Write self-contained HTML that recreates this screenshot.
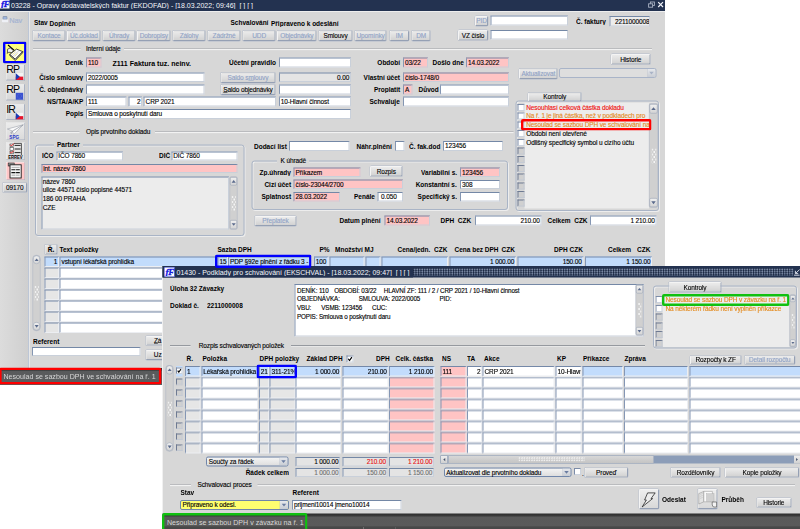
<!DOCTYPE html>
<html><head><meta charset="utf-8"><title>EKDOFAD</title>
<style>
html,body{margin:0;padding:0;background:#fff;}
body{width:800px;height:529px;position:relative;overflow:hidden;font-family:"Liberation Sans",sans-serif;}
#s{position:absolute;left:0;top:0;width:1600px;height:1058px;transform:scale(0.5);transform-origin:0 0;overflow:hidden;}

.a{position:absolute;box-sizing:content-box;white-space:nowrap;}
.t{font:13px/20px "Liberation Sans",sans-serif;color:#000;letter-spacing:-0.24px;-webkit-text-stroke:0.24px currentColor;}
.b{font:bold 13.2px/20px "Liberation Sans",sans-serif;color:#000;transform:scaleX(0.985);transform-origin:0 50%;}
.b.r{transform-origin:100% 50%;}
.tt{font:16px/20px "Liberation Sans",sans-serif;color:#f4f6fa;transform:scaleX(0.875);transform-origin:0 50%;}
.st{font:14.8px/20px "Liberation Sans",sans-serif;color:#d8d8d8;transform:scaleX(0.958);transform-origin:0 50%;}
.tb{background:#233250;}
.tex{background-color:#3b4a67;background-image:radial-gradient(circle at 2px 2px,#8391ac 1px,transparent 2px),radial-gradient(circle at 2px 2px,#17243d 1.3px,transparent 2.2px);background-size:5px 4.2px;background-position:2.5px 0.2px,0 2.1px;}
.f{box-sizing:border-box;border:2px solid;border-color:#7488a6 #c9d0da #c9d0da #8496b2;font:13px/16px "Liberation Sans",sans-serif;color:#000;overflow-x:clip;overflow-y:visible;letter-spacing:-0.24px;-webkit-text-stroke:0.24px currentColor;}
.ft{position:absolute;white-space:nowrap;font:13px/20px "Liberation Sans",sans-serif;letter-spacing:-0.24px;-webkit-text-stroke:0.24px currentColor;}
.bt{position:absolute;left:0;right:0;text-align:center;white-space:nowrap;font:13px/20px "Liberation Sans",sans-serif;letter-spacing:-0.24px;-webkit-text-stroke:0.2px currentColor;}
.g{border-color:#7488a8 #eceef2 #eceef2 #8496b4;}
.btn{box-sizing:border-box;border:2px solid;border-color:#f4f4f4 #95a0b4 #95a0b4 #f4f4f4;box-shadow:0 0 0 0.8px #b4bccb;background:linear-gradient(#ebebeb,#d2d2d2);border-radius:3px;text-align:center;font:13px/16px "Liberation Sans",sans-serif;color:#000;overflow:hidden;letter-spacing:-0.24px;}
.btn.dis{color:#8fa2c6;}
.btn u{text-decoration:underline;}
.hl{height:3.2px;background:linear-gradient(#8e9299 0,#8e9299 45%,#f2f2f2 55%,#f2f2f2 100%);transform:translateY(-0.8px);}
.grp{box-sizing:border-box;border:2px solid #a9b4c6;border-radius:6px;box-shadow:inset 2px 2px 0 #ededed,2px 2px 0 #ededed;}
.chk{box-sizing:border-box;border:2px solid;border-color:#7c8ca8 #ccd3de #ccd3de #7c8ca8;}
.vs{box-sizing:border-box;background:#d0d0d0;border:1px solid #a8b0c0;}
.vs .sa{position:absolute;left:0;right:0;background:linear-gradient(#f0f0f0,#d4d4d4);border:1px solid #98a4b8;box-sizing:border-box;}
.vs .sa svg{position:absolute;left:0;top:0;width:100%;height:100%;}
.vs .grip{position:absolute;left:3.6px;right:2.4px;height:30px;background-image:radial-gradient(circle at 2px 2px,#f6f6f6 1.2px,transparent 2px),radial-gradient(circle at 2px 2px,#f6f6f6 1.2px,transparent 2px);background-size:6.8px 10px;background-position:0 0,3.4px 5px;}
.hgrip{position:absolute;left:140px;width:132px;top:2px;height:10px;background-image:radial-gradient(circle at 2px 2px,#f4f4f4 1.2px,transparent 1.8px);background-size:5px 5px;}
.cb{position:absolute;right:0;top:0;width:16px;background:linear-gradient(#e6e8ec,#c9cdd4);border-left:1px solid #aab2c2;border-radius:0 3px 3px 0;}
.cb svg{position:absolute;left:0;top:0;width:100%;height:100%;}
.ib{background:linear-gradient(#eeeeee,#d8d8d8);}
</style></head>
<body>
<div id="s">
<div class="a" style="left:0;top:0;width:1330px;height:736px;background:#d7d7d7;"></div>
<div class="a" style="left:0;top:21px;width:56px;height:715px;background:linear-gradient(90deg,#dcdcdc,#cfcfcf);border-right:2px solid #bcc6d6;box-shadow:2px 0 0 #e8e8e8;"></div>
<div class="a tb" style="left:0;top:0;width:1330px;height:21.8px;"></div>
<div class="a" style="left:0;top:0;width:19px;height:17px;background:#fff;"></div>
<div class="a" style="left:1px;top:-2px;font:italic bold 18px/20px 'Liberation Serif',serif;color:#1414e0;letter-spacing:-2.4px;-webkit-text-stroke:0.6px #1414e0;">&#402;F</div>
<div class="a tt" style="left:22px;top:0.4px;">03228 - Opravy dodavatelských faktur (EKDOFAD) - [18.03.2022; 09:46]&nbsp; [ ] [ ]</div>
<svg class="a" style="left:1280px;top:0px;width:50px;height:20px" viewBox="640 0 25 10"><rect x="650.4" y="2" width="4" height="3.4" fill="#233250" stroke="#a9b2c4" stroke-width="0.9"/><rect x="648.6" y="3.8" width="4" height="3.4" fill="#233250" stroke="#a9b2c4" stroke-width="0.9"/><path d="M658.2 2.2 L663 7 M663 2.2 L658.2 7" stroke="#f0f2f8" stroke-width="1.2"/></svg>
<div class="a" style="left:0;top:21.8px;width:1330px;height:2.4px;background:#eeeeee;"></div>
<svg class="a" style="left:3px;top:32px;width:14px;height:14px" viewBox="0 0 7 7"><rect x="1.2" y="0.3" width="4.6" height="3.4" rx="0.6" fill="#7d8ca6"/><rect x="1.8" y="1" width="3.4" height="2" fill="#9db4dc"/><rect x="0.4" y="3.6" width="6.2" height="2.6" rx="0.6" fill="#eef0f6"/></svg>
<div class="a t" style="left:18.6px;top:30px;color:#a6b4d2;font-size:14.8px;-webkit-text-stroke:0.4px #a6b4d2;">Nav</div>
<div class="a" style="left:5.6px;top:83.4px;width:47.8px;height:43.8px;box-shadow:inset 0 0 0 4.8px #0000ff;background:#ffff80;border-radius:3.6px;"></div>
<svg class="a" style="left:0px;top:76px;width:64px;height:60px" viewBox="0 38 32 30"><path d="M9.7 54.5 L16.5 49.1 L22.7 51.6 L15.3 59.3 Z" fill="#fafafa" stroke="#000" stroke-width="0.7" stroke-linejoin="round"/><path d="M9.7 54.5 L9.9 55.8 L15.3 60.6 L22.7 52.8 L22.7 51.6 L15.3 59.3 Z" fill="#d8d8d8" stroke="#000" stroke-width="0.6" stroke-linejoin="round"/><path d="M13 56.2 L19.3 50.3" stroke="#b0b0b0" stroke-width="0.5"/><path d="M12.2 54.6 L15.6 51.8 M14.6 56.4 L17.6 53.4" stroke="#e8e070" stroke-width="0.7"/><path d="M7.6 49.2 L10.4 47.8 L13.2 50.6 L12 52.6 L8.6 52.2 L7.4 53.4 Z" fill="#f4f4f4" stroke="#222" stroke-width="0.7" stroke-linejoin="round"/><path d="M8 45 L14.3 50.3" stroke="#000" stroke-width="1.1"/></svg>
<div class="a" style="left:12px;top:128.6px;width:38px;height:32.6px;background:linear-gradient(#ebebeb,#d8d8d8);border-right:2px solid #aab2c2;border-bottom:2px solid #aab2c2;border-top:1px solid #f4f4f4;border-left:1px solid #f4f4f4;box-sizing:border-box;"></div>
<div class="a" style="left:12.6px;top:125.8px;font:21px/26px 'Liberation Sans',sans-serif;color:#000;letter-spacing:-1.8px;">RP</div>
<svg class="a" style="left:31.4px;top:145.8px;width:15.6px;height:14.6px" viewBox="0 0 8 7.3"><rect width="8" height="3.65" fill="#f4f4f4"/><rect y="3.65" width="8" height="3.65" fill="#e8142c"/><path d="M0 0 L4.4 3.65 L0 7.3 Z" fill="#1c3cb4"/></svg>
<div class="a" style="left:12px;top:168px;width:38px;height:32.6px;background:linear-gradient(#ebebeb,#d8d8d8);border-right:2px solid #aab2c2;border-bottom:2px solid #aab2c2;border-top:1px solid #f4f4f4;border-left:1px solid #f4f4f4;box-sizing:border-box;"></div>
<div class="a" style="left:12.6px;top:165.2px;font:21px/26px 'Liberation Sans',sans-serif;color:#000;letter-spacing:-1.8px;">RP</div>
<svg class="a" style="left:31.4px;top:185.2px;width:15.6px;height:14.6px" viewBox="0 0 8 7.3"><rect width="8" height="7.3" fill="#3a52d0"/><circle cx="4" cy="3.65" r="2.2" fill="none" stroke="#6478e0" stroke-width="0.8" stroke-dasharray="0.7 0.7"/></svg>
<div class="a" style="left:12px;top:207.6px;width:38px;height:32.6px;background:linear-gradient(#ebebeb,#d8d8d8);border-right:2px solid #aab2c2;border-bottom:2px solid #aab2c2;border-top:1px solid #f4f4f4;border-left:1px solid #f4f4f4;box-sizing:border-box;"></div>
<div class="a" style="left:12.6px;top:204.8px;font:21px/26px 'Liberation Sans',sans-serif;color:#000;letter-spacing:-1.8px;">IR</div>
<svg class="a" style="left:31.4px;top:224.8px;width:15.6px;height:14.6px" viewBox="0 0 8 7.3"><rect width="8" height="3.65" fill="#f4f4f4"/><rect y="3.65" width="8" height="3.65" fill="#e8142c"/><path d="M0 0 L4.4 3.65 L0 7.3 Z" fill="#1c3cb4"/></svg>
<div class="a" style="left:12.4px;top:245.4px;width:37.6px;height:35px;background:linear-gradient(#ececec,#dadada);border:1px solid;border-color:#f4f4f4 #a8b0c2 #a8b0c2 #f4f4f4;box-sizing:border-box;"></div>
<svg class="a" style="left:4px;top:240px;width:56px;height:128px" viewBox="2 120 28 64"><path d="M7.4 129 L23.2 124.8 L13.6 134.6 L12.4 131 Z" fill="#fbfbfb" stroke="#8a909c" stroke-width="0.5" stroke-linejoin="round"/><path d="M12.4 131 L23.2 124.8 L10.6 132.4 L11.4 134 Z" fill="#b8bcc6" stroke="#8a909c" stroke-width="0.35"/><text x="14.2" y="139.3" font-family="Liberation Sans" font-weight="bold" font-size="4.6" fill="#2a36c8" text-anchor="middle">SPG</text></svg>
<div class="a" style="left:12.4px;top:284.8px;width:37.6px;height:34.4px;background:linear-gradient(#ececec,#dedede);border:1px solid;border-color:#f4f4f4 #a8b0c2 #a8b0c2 #f4f4f4;box-sizing:border-box;"></div>
<svg class="a" style="left:4px;top:240px;width:56px;height:128px" viewBox="2 120 28 64"><rect x="10" y="144" width="3.4" height="2.6" fill="#fff" stroke="#222" stroke-width="0.5"/><rect x="10" y="147.6" width="3.4" height="2.6" fill="#fff" stroke="#222" stroke-width="0.5"/><rect x="10" y="151.2" width="3.4" height="2.6" fill="#fff" stroke="#222" stroke-width="0.5"/><path d="M10.2 144.6 L11.4 146 L13.8 143.4 M10.2 151.8 L11.4 153.2 L13.8 150.6" stroke="#e01818" stroke-width="0.9" fill="none"/><path d="M14.6 145.4 H20.6 M14.6 149 H20.6 M14.6 152.6 H20.6" stroke="#111" stroke-width="0.9"/><path d="M14 143.4 H21.4 V155" stroke="#111" stroke-width="0.7" fill="none"/><text x="15.4" y="158.6" font-family="Liberation Sans" font-weight="bold" font-size="4.8" fill="#000" text-anchor="middle" textLength="14.4" lengthAdjust="spacingAndGlyphs">ERREV</text></svg>
<div class="a" style="left:12.4px;top:323.6px;width:37.6px;height:36.4px;background:#ffc6c6;border:1px solid;border-color:#f4f4f4 #a8b0c2 #a8b0c2 #f4f4f4;box-sizing:border-box;"></div>
<svg class="a" style="left:4px;top:240px;width:56px;height:128px" viewBox="2 120 28 64"><rect x="8.2" y="163" width="6" height="3" fill="#9a9a9a" stroke="#222" stroke-width="0.6"/><rect x="10" y="164.8" width="11.2" height="13.2" fill="#f6f6f6" stroke="#1a1a1a" stroke-width="0.9"/><path d="M11.6 167.4 H19.6" stroke="#888" stroke-width="0.6"/><path d="M11.4 169.8 H19.8 M11.4 172.6 H19.8" stroke="#111" stroke-width="1.1"/><path d="M11.6 175.2 H19.6" stroke="#777" stroke-width="0.6"/><path d="M15.6 168.6 V176.4" stroke="#f6f6f6" stroke-width="0.6"/></svg>
<div class="a btn " style="left:5.2px;top:364.6px;width:48.8px;height:20px;"><div class="bt" style="top:-1.7px;">09170</div></div>
<div class="a b" style="left:68px;top:35.2px;">Stav</div>
<div class="a b" style="left:99.2px;top:36.8px;">Doplněn</div>
<div class="a b" style="left:461px;top:35.2px;">Schvalování</div>
<div class="a b" style="left:541.6px;top:36.8px;">Připraveno k odeslání</div>
<div class="a btn dis " style="left:65px;top:60.6px;width:66.4px;height:21.2px;"><div class="bt" style="top:-1.1px;">Kontace</div></div>
<div class="a btn dis " style="left:134px;top:60.6px;width:67.4px;height:21.2px;"><div class="bt" style="top:-1.1px;">Úč.doklad</div></div>
<div class="a btn dis " style="left:205px;top:60.6px;width:66.4px;height:21.2px;"><div class="bt" style="top:-1.1px;">Úhrady</div></div>
<div class="a btn dis " style="left:274px;top:60.6px;width:67.4px;height:21.2px;"><div class="bt" style="top:-1.1px;">Dobropisy</div></div>
<div class="a btn dis " style="left:345px;top:60.6px;width:66.4px;height:21.2px;"><div class="bt" style="top:-1.1px;">Zálohy</div></div>
<div class="a btn dis " style="left:415px;top:60.6px;width:66.4px;height:21.2px;"><div class="bt" style="top:-1.1px;">Zádržné</div></div>
<div class="a btn dis " style="left:485px;top:60.6px;width:66.4px;height:21.2px;"><div class="bt" style="top:-1.1px;">UDD</div></div>
<div class="a btn dis " style="left:554px;top:60.6px;width:79.4px;height:21.2px;"><div class="bt" style="top:-1.1px;">Objednávky</div></div>
<div class="a btn " style="left:636.5px;top:60.6px;width:68.9px;height:21.2px;"><div class="bt" style="top:-1.1px;">Smlouvy</div></div>
<div class="a btn dis " style="left:709px;top:60.6px;width:64.4px;height:21.2px;"><div class="bt" style="top:-1.1px;">Upomínky</div></div>
<div class="a btn dis " style="left:779px;top:60.6px;width:39.4px;height:21.2px;"><div class="bt" style="top:-1.1px;">IM</div></div>
<div class="a btn dis " style="left:823px;top:60.6px;width:38.4px;height:21.2px;"><div class="bt" style="top:-1.1px;">DM</div></div>
<div class="a btn dis " style="left:950px;top:32.4px;width:26px;height:19.2px;"><div class="bt" style="top:-2.1px;">PID</div></div>
<div class="a f " style="left:981px;top:31.4px;width:155px;height:19.8px;background:#fff;"></div>
<div class="a b" style="left:1152px;top:33px;">Č. faktury</div>
<div class="a f " style="left:1219.2px;top:32px;width:80.8px;height:20.8px;background:#ececec;"><div class="ft" style="left:2px;top:-1.3px;">&nbsp;&nbsp;2211000008</div></div>
<div class="a btn " style="left:916px;top:60.4px;width:60px;height:20.6px;"><div class="bt" style="top:-1.4px;">VZ číslo</div></div>
<div class="a f " style="left:981px;top:60px;width:155px;height:19.4px;background:#fff;"></div>
<div class="a hl" style="left:66px;top:98px;width:95px;"></div>
<div class="a t" style="left:172px;top:88px;">Interní údaje</div>
<div class="a hl" style="left:248px;top:98px;width:1056px;"></div>
<div class="a b r" style="right:1433.6px;top:115.6px;">Deník</div>
<div class="a f " style="left:172px;top:115.4px;width:31.2px;height:19.6px;background:#ffc4c4;"><div class="ft" style="left:2px;top:-1.9px;">110</div></div>
<div class="a b" style="left:224.8px;top:115.6px;font-size:14.3px;">Z111 Faktura tuz. neinv.</div>
<div class="a b" style="left:457.5px;top:115.6px;">Účetní pravidlo</div>
<div class="a f " style="left:557.5px;top:115.4px;width:144px;height:19.6px;background:#fff;"></div>
<div class="a b r" style="right:800px;top:115.6px;">Období</div>
<div class="a f " style="left:806px;top:115.4px;width:50px;height:19.6px;background:#ffc4c4;"><div class="ft" style="left:2px;top:-1.9px;">03/22</div></div>
<div class="a b" style="left:864.8px;top:115.6px;">Došlo dne</div>
<div class="a f " style="left:932px;top:115.4px;width:85.5px;height:19.6px;background:#ffc4c4;"><div class="ft" style="left:2px;top:-1.9px;">14.03.2022</div></div>
<div class="a btn " style="left:1222px;top:108px;width:79px;height:21px;"><div class="bt" style="top:-1.2px;">Historie</div></div>
<div class="a b r" style="right:1433.6px;top:145.2px;">Číslo smlouvy</div>
<div class="a f " style="left:172px;top:145.4px;width:236.8px;height:19px;background:#fff;"><div class="ft" style="left:2px;top:-2.2px;">2022/0005</div></div>
<div class="a btn dis " style="left:441px;top:144.8px;width:109.8px;height:21.2px;"><div class="bt" style="top:-1.1px;">Saldo s<u>m</u>louvy</div></div>
<div class="a f " style="left:557.5px;top:145.4px;width:144px;height:19px;background:#e4e4e4;"><div class="ft" style="right:1px;top:-2.2px;">0.00</div></div>
<div class="a b r" style="right:800px;top:145.2px;">Vlastní účet</div>
<div class="a f " style="left:806px;top:145.4px;width:211.5px;height:19px;background:#ffc4c4;"><div class="ft" style="left:2px;top:-2.2px;">číslo-1748/0</div></div>
<div class="a btn dis " style="left:1038px;top:136.8px;width:77.2px;height:21.2px;"><div class="bt" style="top:-1.1px;">Aktualizovat</div></div>
<div class="a f" style="left:1118px;top:136px;width:194.8px;height:20px;background:#dedede;border-radius:4px;border-color:#a9b4c8;"><div class="cb" style="height:16px"><svg viewBox="0 0 10 10" preserveAspectRatio="none"><path d="M2.2 3.4 L5 7 L7.8 3.4 Z" fill="#a9b3c6"/></svg></div></div>
<div class="a b r" style="right:1433.6px;top:169.4px;">Č. objednávky</div>
<div class="a f " style="left:172px;top:169.2px;width:236.8px;height:19.6px;background:#fff;"></div>
<div class="a btn " style="left:441px;top:168.6px;width:109.8px;height:21.6px;"><div class="bt" style="top:-0.9px;"><u>S</u>aldo objednávky</div></div>
<div class="a f " style="left:557.5px;top:169.2px;width:144px;height:19.6px;background:#fff;"></div>
<div class="a b r" style="right:800px;top:169.4px;">Proplatit</div>
<div class="a f " style="left:806px;top:169.2px;width:18.8px;height:19.6px;background:#ffc4c4;"><div class="ft" style="left:2px;top:-1.9px;">A</div></div>
<div class="a b" style="left:836.8px;top:169.4px;">Důvod</div>
<div class="a f " style="left:880px;top:169.2px;width:137.5px;height:19.6px;background:#fff;"></div>
<div class="a b r" style="right:1433.6px;top:193.8px;">NS/TA/A/KP</div>
<div class="a f " style="left:172px;top:193.4px;width:81.2px;height:19.8px;background:#fff;"><div class="ft" style="left:2px;top:-1.8px;">111</div></div>
<div class="a f " style="left:257.2px;top:193.4px;width:26.8px;height:19.8px;background:#fff;"><div class="ft" style="right:1px;top:-1.8px;">2</div></div>
<div class="a f " style="left:287.2px;top:193.4px;width:265.3px;height:19.8px;background:#fff;"><div class="ft" style="left:2px;top:-1.8px;">CRP 2021</div></div>
<div class="a f " style="left:557.5px;top:193.4px;width:144px;height:19.8px;background:#fff;"><div class="ft" style="left:2px;top:-1.8px;">10-Hlavní činnost</div></div>
<div class="a b r" style="right:800px;top:193.8px;">Schvaluje</div>
<div class="a f " style="left:806px;top:193.4px;width:211.5px;height:19.8px;background:#fff;"></div>
<div class="a b r" style="right:1433.6px;top:218.4px;">Popis</div>
<div class="a f " style="left:172px;top:218px;width:529.5px;height:19.8px;background:#fff;"><div class="ft" style="left:2px;top:-1.8px;">Smlouva o poskytnutí daru</div></div>
<div class="a grp" style="left:1031px;top:201px;width:286.5px;height:221px;"></div>
<div class="a btn " style="left:1056px;top:184.8px;width:107.2px;height:18.6px;"><div class="bt" style="top:-2.4px;">Kontroly</div></div>
<div class="a " style="left:1049px;top:206px;width:248.5px;height:211px;background:#ececec;"></div>
<div class="a vs" style="left:1298px;top:207px;width:18px;height:208.4px;border-radius:3px;"><div class="sa" style="top:0;height:18.9px;border-radius:3px;"><svg viewBox="0 0 10 10"><path d="M1.8 7 L5 2.9 L8.2 7 Z" fill="#5a6a8c"/></svg></div><div class="sa" style="bottom:0;height:18.9px;border-radius:3px;"><svg viewBox="0 0 10 10"><path d="M1.8 3 L5 7.1 L8.2 3 Z" fill="#5a6a8c"/></svg></div><div class="grip" style="top:89.2px"></div></div>
<div class="a chk" style="left:1035px;top:208px;width:14px;height:14px;background:#fff;"></div>
<div class="a t" style="left:1052.5px;top:205px;color:#f01010;">Nesouhlasí celková částka dokladu</div>
<div class="a chk" style="left:1035px;top:225.4px;width:14px;height:14px;background:#fff;"></div>
<div class="a t" style="left:1052.5px;top:222.4px;color:#e48a1c;">Na ř. 1 je jiná částka, než v podkladech pro</div>
<div class="a chk" style="left:1035px;top:242.8px;width:14px;height:14px;background:#fff;"></div>
<div class="a t" style="left:1052.5px;top:239.8px;color:#e48a1c;">Nesoulad se sazbou DPH ve schvalování na</div>
<div class="a chk" style="left:1035px;top:260.2px;width:14px;height:14px;background:#fff;"></div>
<div class="a t" style="left:1052.5px;top:257.2px;color:#000;">Období není otevřené</div>
<div class="a chk" style="left:1035px;top:277.6px;width:14px;height:14px;background:#fff;"></div>
<div class="a t" style="left:1052.5px;top:274.6px;color:#000;">Odlišný specifický symbol u cizího účtu</div>
<div class="a chk" style="left:1035px;top:295px;width:14px;height:14px;background:#d0d0d0;border-color:#6e7a92 #c4cad4 #c4cad4 #6e7a92;"></div>
<div class="a chk" style="left:1035px;top:312.4px;width:14px;height:14px;background:#d0d0d0;border-color:#6e7a92 #c4cad4 #c4cad4 #6e7a92;"></div>
<div class="a chk" style="left:1035px;top:329.8px;width:14px;height:14px;background:#d0d0d0;border-color:#6e7a92 #c4cad4 #c4cad4 #6e7a92;"></div>
<div class="a chk" style="left:1035px;top:347.2px;width:14px;height:14px;background:#d0d0d0;border-color:#6e7a92 #c4cad4 #c4cad4 #6e7a92;"></div>
<div class="a chk" style="left:1035px;top:364.6px;width:14px;height:14px;background:#d0d0d0;border-color:#6e7a92 #c4cad4 #c4cad4 #6e7a92;"></div>
<div class="a chk" style="left:1035px;top:382px;width:14px;height:14px;background:#d0d0d0;border-color:#6e7a92 #c4cad4 #c4cad4 #6e7a92;"></div>
<div class="a chk" style="left:1035px;top:399.4px;width:14px;height:14px;background:#d0d0d0;border-color:#6e7a92 #c4cad4 #c4cad4 #6e7a92;"></div>
<div class="a hl" style="left:66px;top:264px;width:93px;"></div>
<div class="a t" style="left:172px;top:254px;">Opis prvotního dokladu</div>
<div class="a hl" style="left:310px;top:264px;width:717px;"></div>
<div class="a grp" style="left:70px;top:289px;width:419px;height:183px;"></div>
<div class="a" style="left:108px;top:280px;width:58px;height:18px;background:#d7d7d7;"></div>
<div class="a b" style="left:114px;top:279px;">Partner</div>
<div class="a b" style="left:84px;top:302px;">IČO</div>
<div class="a f " style="left:112.5px;top:302.5px;width:133.5px;height:18.5px;background:#fff;"><div class="ft" style="left:2px;top:-2.46px;">IČO 7860</div></div>
<div class="a b" style="left:317.5px;top:302px;">DIČ</div>
<div class="a f " style="left:342.5px;top:302.5px;width:132.5px;height:18.5px;background:#fff;"><div class="ft" style="left:2px;top:-2.46px;">DIČ 7860</div></div>
<div class="a f " style="left:82.5px;top:327.5px;width:392.5px;height:18.5px;background:#ffc4c4;"><div class="ft" style="left:2px;top:-2.46px;">int. název 7860</div></div>
<div class="a f " style="left:82.5px;top:352.5px;width:375px;height:106.5px;background:#ececec;"></div>
<div class="a t" style="left:85.5px;top:352.5px;">název 7860</div>
<div class="a t" style="left:85.5px;top:370.1px;">ulice 44571 číslo popisné 44571</div>
<div class="a t" style="left:85.5px;top:387.7px;">186 00 PRAHA</div>
<div class="a t" style="left:85.5px;top:405.3px;">CZE</div>
<div class="a vs" style="left:458.6px;top:352.5px;width:16.8px;height:106.5px;border-radius:3px;"><div class="sa" style="top:0;height:17.64px;border-radius:3px;"><svg viewBox="0 0 10 10"><path d="M1.8 7 L5 2.9 L8.2 7 Z" fill="#5a6a8c"/></svg></div><div class="sa" style="bottom:0;height:17.64px;border-radius:3px;"><svg viewBox="0 0 10 10"><path d="M1.8 3 L5 7.1 L8.2 3 Z" fill="#5a6a8c"/></svg></div><div class="grip" style="top:38.24px"></div></div>
<div class="a b" style="left:508px;top:282.8px;">Dodací list</div>
<div class="a f " style="left:578px;top:282px;width:121.2px;height:20px;background:#fff;"></div>
<div class="a b" style="left:713.2px;top:282.8px;">Náhr.plnění</div>
<div class="a f " style="left:790px;top:282px;width:19px;height:20px;background:#fff;"></div>
<div class="a b" style="left:817.5px;top:282.8px;">Č. fak.dod</div>
<div class="a f " style="left:886px;top:282px;width:120px;height:20px;background:#fff;"><div class="ft" style="left:2px;top:-1.7px;">123456</div></div>
<div class="a grp" style="left:502.5px;top:321px;width:513.5px;height:99px;"></div>
<div class="a" style="left:554px;top:312px;width:64px;height:18px;background:#d7d7d7;"></div>
<div class="a t" style="left:561px;top:311px;">K úhradě</div>
<div class="a b r" style="right:1018px;top:335.2px;">Zp.úhrady</div>
<div class="a f " style="left:587.2px;top:335.2px;width:134px;height:19.2px;background:#ffc4c4;"><div class="ft" style="left:2px;top:-2.1px;">Příkazem</div></div>
<div class="a btn " style="left:740px;top:332px;width:64.8px;height:20.8px;"><div class="bt" style="top:-1.3px;">Rozpis</div></div>
<div class="a b r" style="right:686px;top:335.2px;">Variabilní s.</div>
<div class="a f " style="left:920px;top:335.2px;width:80px;height:19.2px;background:#ffc4c4;"><div class="ft" style="left:2px;top:-2.1px;">123456</div></div>
<div class="a b r" style="right:1018px;top:359.2px;">Cizí účet</div>
<div class="a f " style="left:587.2px;top:359.2px;width:218.8px;height:19.2px;background:#ffc4c4;"><div class="ft" style="left:2px;top:-2.1px;">číslo-23044/2700</div></div>
<div class="a b r" style="right:686px;top:359.2px;">Konstantní s.</div>
<div class="a f " style="left:920px;top:359.6px;width:80px;height:18.8px;background:#fff;"><div class="ft" style="left:2px;top:-2.3px;">308</div></div>
<div class="a b r" style="right:1018px;top:384px;">Splatnost</div>
<div class="a f " style="left:587.2px;top:384px;width:92.8px;height:19.4px;background:#ffc4c4;"><div class="ft" style="left:2px;top:-2px;">28.03.2022</div></div>
<div class="a b" style="left:708px;top:384px;">Penále</div>
<div class="a f " style="left:754.8px;top:384px;width:51.2px;height:19.4px;background:#fff;"><div class="ft" style="left:2px;top:-2px;">&nbsp;0.050</div></div>
<div class="a b r" style="right:686px;top:384px;">Specifický s.</div>
<div class="a f " style="left:920px;top:384px;width:80px;height:19px;background:#fff;"></div>
<div class="a btn dis " style="left:509px;top:431.5px;width:83.5px;height:20px;"><div class="bt" style="top:-1.7px;">Přeplatek</div></div>
<div class="a b" style="left:679px;top:431.6px;">Datum plnění</div>
<div class="a f " style="left:769px;top:431px;width:91px;height:20.2px;background:#ffc4c4;"><div class="ft" style="left:2px;top:-1.6px;">14.03.2022</div></div>
<div class="a b" style="left:881px;top:431.6px;">DPH&nbsp; CZK</div>
<div class="a f " style="left:950px;top:431px;width:132.5px;height:20.2px;background:#fff;"><div class="ft" style="right:1px;top:-1.6px;">210.00</div></div>
<div class="a b" style="left:1095px;top:431.6px;">Celkem&nbsp; CZK</div>
<div class="a f " style="left:1180px;top:431px;width:132.5px;height:20.2px;background:#fff;"><div class="ft" style="right:1px;top:-1.6px;">1 210.00</div></div>
<div class="a btn " style="left:89px;top:489px;width:26px;height:20px;overflow:visible;"><div class="bt" style="top:-1.7px;"><b>Ř.</b></div></div>
<div class="a b" style="left:119px;top:489px;">Text položky</div>
<div class="a b" style="left:435px;top:489px;">Sazba DPH</div>
<div class="a b" style="left:639px;top:489px;">P%</div>
<div class="a b" style="left:670px;top:489px;">Množství MJ</div>
<div class="a b r" style="right:739px;top:489px;">Cena/jedn.</div>
<div class="a b" style="left:867.5px;top:489px;">CZK</div>
<div class="a b" style="left:909px;top:489px;">Cena bez DPH</div>
<div class="a b" style="left:1002.5px;top:489px;">CZK</div>
<div class="a b" style="left:1107.5px;top:489px;">DPH</div>
<div class="a b" style="left:1139px;top:489px;">CZK</div>
<div class="a b" style="left:1216px;top:489px;">Celkem</div>
<div class="a b" style="left:1274px;top:489px;">CZK</div>
<div class="a f g" style="left:89px;top:512.5px;width:28.6px;height:21.6px;background:#c2dcfc;"><div class="ft" style="right:1px;top:-0.9px;">1</div></div>
<div class="a f g" style="left:119px;top:512.5px;width:312.6px;height:21.6px;background:#c2dcfc;"><div class="ft" style="left:2px;top:-0.9px;">vstupní lékařská prohlídka</div></div>
<div class="a f g" style="left:435px;top:512.5px;width:20.6px;height:21.6px;background:#c2dcfc;"><div class="ft" style="left:2px;top:-0.9px;">15</div></div>
<div class="a f g" style="left:456px;top:512.5px;width:165.6px;height:21.6px;background:#c2dcfc;"><div class="ft" style="left:2px;top:-0.9px;">PDP §92e plnění z řádku 3 - 1</div></div>
<div class="a f g" style="left:627.5px;top:512.5px;width:29.1px;height:21.6px;background:#c2dcfc;"><div class="ft" style="left:2px;top:-0.9px;">100</div></div>
<div class="a f g" style="left:659px;top:512.5px;width:70.1px;height:21.6px;background:#c2dcfc;"></div>
<div class="a f g" style="left:731px;top:512.5px;width:29.6px;height:21.6px;background:#c2dcfc;"></div>
<div class="a f g" style="left:762.5px;top:512.5px;width:133.1px;height:21.6px;background:#c2dcfc;"></div>
<div class="a f g" style="left:899px;top:512.5px;width:132.6px;height:21.6px;background:#c2dcfc;"><div class="ft" style="right:1px;top:-0.9px;">1 000.00</div></div>
<div class="a f g" style="left:1035px;top:512.5px;width:131.6px;height:21.6px;background:#c2dcfc;"><div class="ft" style="right:1px;top:-0.9px;">150.00</div></div>
<div class="a f g" style="left:1170px;top:512.5px;width:134.1px;height:21.6px;background:#c2dcfc;"><div class="ft" style="right:1px;top:-0.9px;">1 150.00</div></div>
<div class="a f g" style="left:89px;top:534.5px;width:28.6px;height:21.6px;background:#e6e6e6;"></div>
<div class="a f g" style="left:119px;top:534.5px;width:312.6px;height:21.6px;background:#fff;"></div>
<div class="a f g" style="left:435px;top:534.5px;width:20.6px;height:21.6px;background:#fff;"></div>
<div class="a f g" style="left:456px;top:534.5px;width:165.6px;height:21.6px;background:#fff;"></div>
<div class="a f g" style="left:627.5px;top:534.5px;width:29.1px;height:21.6px;background:#fff;"></div>
<div class="a f g" style="left:659px;top:534.5px;width:70.1px;height:21.6px;background:#fff;"></div>
<div class="a f g" style="left:731px;top:534.5px;width:29.6px;height:21.6px;background:#fff;"></div>
<div class="a f g" style="left:762.5px;top:534.5px;width:133.1px;height:21.6px;background:#fff;"></div>
<div class="a f g" style="left:899px;top:534.5px;width:132.6px;height:21.6px;background:#fff;"></div>
<div class="a f g" style="left:1035px;top:534.5px;width:131.6px;height:21.6px;background:#fff;"></div>
<div class="a f g" style="left:1170px;top:534.5px;width:134.1px;height:21.6px;background:#fff;"></div>
<div class="a f g" style="left:89px;top:556.5px;width:28.6px;height:21.6px;background:#e6e6e6;"></div>
<div class="a f g" style="left:119px;top:556.5px;width:312.6px;height:21.6px;background:#fff;"></div>
<div class="a f g" style="left:435px;top:556.5px;width:20.6px;height:21.6px;background:#fff;"></div>
<div class="a f g" style="left:456px;top:556.5px;width:165.6px;height:21.6px;background:#fff;"></div>
<div class="a f g" style="left:627.5px;top:556.5px;width:29.1px;height:21.6px;background:#fff;"></div>
<div class="a f g" style="left:659px;top:556.5px;width:70.1px;height:21.6px;background:#fff;"></div>
<div class="a f g" style="left:731px;top:556.5px;width:29.6px;height:21.6px;background:#fff;"></div>
<div class="a f g" style="left:762.5px;top:556.5px;width:133.1px;height:21.6px;background:#fff;"></div>
<div class="a f g" style="left:899px;top:556.5px;width:132.6px;height:21.6px;background:#fff;"></div>
<div class="a f g" style="left:1035px;top:556.5px;width:131.6px;height:21.6px;background:#fff;"></div>
<div class="a f g" style="left:1170px;top:556.5px;width:134.1px;height:21.6px;background:#fff;"></div>
<div class="a f g" style="left:89px;top:578.5px;width:28.6px;height:21.6px;background:#e6e6e6;"></div>
<div class="a f g" style="left:119px;top:578.5px;width:312.6px;height:21.6px;background:#fff;"></div>
<div class="a f g" style="left:435px;top:578.5px;width:20.6px;height:21.6px;background:#fff;"></div>
<div class="a f g" style="left:456px;top:578.5px;width:165.6px;height:21.6px;background:#fff;"></div>
<div class="a f g" style="left:627.5px;top:578.5px;width:29.1px;height:21.6px;background:#fff;"></div>
<div class="a f g" style="left:659px;top:578.5px;width:70.1px;height:21.6px;background:#fff;"></div>
<div class="a f g" style="left:731px;top:578.5px;width:29.6px;height:21.6px;background:#fff;"></div>
<div class="a f g" style="left:762.5px;top:578.5px;width:133.1px;height:21.6px;background:#fff;"></div>
<div class="a f g" style="left:899px;top:578.5px;width:132.6px;height:21.6px;background:#fff;"></div>
<div class="a f g" style="left:1035px;top:578.5px;width:131.6px;height:21.6px;background:#fff;"></div>
<div class="a f g" style="left:1170px;top:578.5px;width:134.1px;height:21.6px;background:#fff;"></div>
<div class="a f g" style="left:89px;top:600.5px;width:28.6px;height:21.6px;background:#e6e6e6;"></div>
<div class="a f g" style="left:119px;top:600.5px;width:312.6px;height:21.6px;background:#fff;"></div>
<div class="a f g" style="left:435px;top:600.5px;width:20.6px;height:21.6px;background:#fff;"></div>
<div class="a f g" style="left:456px;top:600.5px;width:165.6px;height:21.6px;background:#fff;"></div>
<div class="a f g" style="left:627.5px;top:600.5px;width:29.1px;height:21.6px;background:#fff;"></div>
<div class="a f g" style="left:659px;top:600.5px;width:70.1px;height:21.6px;background:#fff;"></div>
<div class="a f g" style="left:731px;top:600.5px;width:29.6px;height:21.6px;background:#fff;"></div>
<div class="a f g" style="left:762.5px;top:600.5px;width:133.1px;height:21.6px;background:#fff;"></div>
<div class="a f g" style="left:899px;top:600.5px;width:132.6px;height:21.6px;background:#fff;"></div>
<div class="a f g" style="left:1035px;top:600.5px;width:131.6px;height:21.6px;background:#fff;"></div>
<div class="a f g" style="left:1170px;top:600.5px;width:134.1px;height:21.6px;background:#fff;"></div>
<div class="a f g" style="left:89px;top:622.5px;width:28.6px;height:21.6px;background:#e6e6e6;"></div>
<div class="a f g" style="left:119px;top:622.5px;width:312.6px;height:21.6px;background:#fff;"></div>
<div class="a f g" style="left:435px;top:622.5px;width:20.6px;height:21.6px;background:#fff;"></div>
<div class="a f g" style="left:456px;top:622.5px;width:165.6px;height:21.6px;background:#fff;"></div>
<div class="a f g" style="left:627.5px;top:622.5px;width:29.1px;height:21.6px;background:#fff;"></div>
<div class="a f g" style="left:659px;top:622.5px;width:70.1px;height:21.6px;background:#fff;"></div>
<div class="a f g" style="left:731px;top:622.5px;width:29.6px;height:21.6px;background:#fff;"></div>
<div class="a f g" style="left:762.5px;top:622.5px;width:133.1px;height:21.6px;background:#fff;"></div>
<div class="a f g" style="left:899px;top:622.5px;width:132.6px;height:21.6px;background:#fff;"></div>
<div class="a f g" style="left:1035px;top:622.5px;width:131.6px;height:21.6px;background:#fff;"></div>
<div class="a f g" style="left:1170px;top:622.5px;width:134.1px;height:21.6px;background:#fff;"></div>
<div class="a f g" style="left:89px;top:644.5px;width:28.6px;height:21.6px;background:#e6e6e6;"></div>
<div class="a f g" style="left:119px;top:644.5px;width:312.6px;height:21.6px;background:#fff;"></div>
<div class="a f g" style="left:435px;top:644.5px;width:20.6px;height:21.6px;background:#fff;"></div>
<div class="a f g" style="left:456px;top:644.5px;width:165.6px;height:21.6px;background:#fff;"></div>
<div class="a f g" style="left:627.5px;top:644.5px;width:29.1px;height:21.6px;background:#fff;"></div>
<div class="a f g" style="left:659px;top:644.5px;width:70.1px;height:21.6px;background:#fff;"></div>
<div class="a f g" style="left:731px;top:644.5px;width:29.6px;height:21.6px;background:#fff;"></div>
<div class="a f g" style="left:762.5px;top:644.5px;width:133.1px;height:21.6px;background:#fff;"></div>
<div class="a f g" style="left:899px;top:644.5px;width:132.6px;height:21.6px;background:#fff;"></div>
<div class="a f g" style="left:1035px;top:644.5px;width:131.6px;height:21.6px;background:#fff;"></div>
<div class="a f g" style="left:1170px;top:644.5px;width:134.1px;height:21.6px;background:#fff;"></div>
<div class="a vs" style="left:64.8px;top:510px;width:16.6px;height:152px;border-radius:7px;"><div class="sa" style="top:0;height:17.44px;border-radius:7px;"><svg viewBox="0 0 10 10"><path d="M1.8 7 L5 2.9 L8.2 7 Z" fill="#5a6a8c"/></svg></div><div class="sa" style="bottom:0;height:17.44px;border-radius:7px;"><svg viewBox="0 0 10 10"><path d="M1.8 3 L5 7.1 L8.2 3 Z" fill="#5a6a8c"/></svg></div><div class="grip" style="top:61px"></div></div>
<div class="a b" style="left:66px;top:673px;">Referent</div>
<div class="a f " style="left:64px;top:694px;width:217px;height:18.4px;background:#fff;"></div>
<div class="a btn " style="left:291px;top:672px;width:69px;height:19.4px;"><div class="bt" style="top:-2px;"><u>Z</u>á&nbsp;&nbsp;&nbsp;&nbsp;&nbsp;&nbsp;</div></div>
<div class="a btn " style="left:291px;top:699.6px;width:69px;height:20.4px;"><div class="bt" style="top:-1.5px;">Uz&nbsp;&nbsp;&nbsp;&nbsp;&nbsp;&nbsp;</div></div>
<div class="a" style="left:0;top:736px;width:326px;height:34px;background:linear-gradient(#2c2c2c 0,#3a3a3a 4.4px,#595b5c 6.8px,#5b5d5e 100%);"></div>
<div class="a st" style="left:7px;top:743px;">Nesoulad se sazbou DPH ve schvalování na ř. 1</div>
<div class="a" style="left:324.4px;top:532px;width:1275.6px;height:526px;background:#d7d7d7;border-left:2px solid #f0f0f0;box-sizing:border-box;"></div>
<div class="a tb" style="left:325.2px;top:532px;width:1274.8px;height:23.2px;"></div><div class="a tex" style="left:825px;top:537px;width:762px;height:14px;"></div>
<div class="a" style="left:325.2px;top:532px;width:500.8px;height:23.2px;background:#233250;"></div>
<div class="a" style="left:328px;top:533.8px;width:20.8px;height:20px;background:#fff;border:1px solid #2030c0;box-sizing:border-box"></div>
<div class="a" style="left:330px;top:533.2px;font:italic bold 18px/20px 'Liberation Serif',serif;color:#1414e0;letter-spacing:-2.4px;-webkit-text-stroke:0.6px #1414e0;">&#402;F</div>
<div class="a tt" style="left:352.5px;top:534.4px;">01430 - Podklady pro schvalování (EKSCHVAL) - [18.03.2022; 09:47]&nbsp; [ ] [ ]</div>
<svg class="a" style="left:1586px;top:536px;width:14px;height:16px" viewBox="793 268 7 8"><path d="M799.6 269.6 L795.6 273.4 M795.4 270.8 V273.6 H798.2" stroke="#e4e8f2" stroke-width="0.9" fill="none"/><path d="M794 275.2 H799.6" stroke="#e4e8f2" stroke-width="0.9"/></svg>
<div class="a b" style="left:340px;top:567.5px;">Úloha 32 Závazky</div>
<div class="a b" style="left:340px;top:601px;">Doklad č.</div>
<div class="a b" style="left:414px;top:601px;">2211000008</div>
<div class="a f " style="left:589px;top:567.5px;width:698.5px;height:105px;background:#fff;"></div>
<div class="a vs" style="left:1271px;top:569px;width:15.8px;height:102.4px;border-radius:3px;"><div class="sa" style="top:0;height:16.58px;border-radius:3px;"><svg viewBox="0 0 10 10"><path d="M1.8 7 L5 2.9 L8.2 7 Z" fill="#5a6a8c"/></svg></div><div class="sa" style="bottom:0;height:16.58px;border-radius:3px;"><svg viewBox="0 0 10 10"><path d="M1.8 3 L5 7.1 L8.2 3 Z" fill="#5a6a8c"/></svg></div><div class="grip" style="top:36.2px"></div></div>
<div class="a t" style="left:594px;top:571px;font-size:12.6px;">DENÍK: 110</div>
<div class="a t" style="left:668.5px;top:571px;font-size:12.6px;">OBDOBÍ: 03/22</div>
<div class="a t" style="left:767.5px;top:571px;font-size:12.6px;">HLAVNÍ ZF: 111 / 2 / CRP 2021 / 10-Hlavní činnost</div>
<div class="a t" style="left:594px;top:588.4px;font-size:12.6px;">OBJEDNÁVKA:</div>
<div class="a t" style="left:717.5px;top:588.4px;font-size:12.6px;">SMLOUVA: 2022/0005</div>
<div class="a t" style="left:879px;top:588.4px;font-size:12.6px;">PID:</div>
<div class="a t" style="left:594px;top:606px;font-size:12.6px;">VBU:</div>
<div class="a t" style="left:642.5px;top:606px;font-size:12.6px;">VSMB: 123456</div>
<div class="a t" style="left:744px;top:606px;font-size:12.6px;">CUC:</div>
<div class="a t" style="left:594px;top:623.5px;font-size:12.6px;">POPIS: Smlouva o poskytnutí daru</div>
<div class="a grp" style="left:1306px;top:571px;width:288px;height:126.2px;"></div>
<div class="a btn " style="left:1336.6px;top:564px;width:106.6px;height:21.2px;"><div class="bt" style="top:-1.1px;">Kontroly</div></div>
<div class="a " style="left:1325px;top:589px;width:254px;height:104.6px;background:#ececec;"></div>
<div class="a vs" style="left:1578.8px;top:589px;width:13.6px;height:105.4px;border-radius:3px;"><div class="sa" style="top:0;height:14.28px;border-radius:3px;"><svg viewBox="0 0 10 10"><path d="M1.8 7 L5 2.9 L8.2 7 Z" fill="#5a6a8c"/></svg></div><div class="sa" style="bottom:0;height:14.28px;border-radius:3px;"><svg viewBox="0 0 10 10"><path d="M1.8 3 L5 7.1 L8.2 3 Z" fill="#5a6a8c"/></svg></div><div class="grip" style="top:37.7px"></div></div>
<div class="a chk" style="left:1311px;top:592px;width:14px;height:14px;background:#fff;"></div>
<div class="a chk" style="left:1311px;top:609.5px;width:14px;height:14px;background:#fff;"></div>
<div class="a chk" style="left:1311px;top:627px;width:14px;height:14px;background:#d0d0d0;border-color:#6e7a92 #c4cad4 #c4cad4 #6e7a92;"></div>
<div class="a chk" style="left:1311px;top:644.5px;width:14px;height:14px;background:#d0d0d0;border-color:#6e7a92 #c4cad4 #c4cad4 #6e7a92;"></div>
<div class="a chk" style="left:1311px;top:662px;width:14px;height:14px;background:#d0d0d0;border-color:#6e7a92 #c4cad4 #c4cad4 #6e7a92;"></div>
<div class="a chk" style="left:1311px;top:679.5px;width:14px;height:14px;background:#d0d0d0;border-color:#6e7a92 #c4cad4 #c4cad4 #6e7a92;"></div>
<div class="a t" style="left:1331px;top:589px;color:#e48a1c;">Nesoulad se sazbou DPH v závazku na ř. 1</div>
<div class="a t" style="left:1331px;top:606.5px;color:#e48a1c;">Na některém řádku není vyplněn příkazce</div>
<div class="a hl" style="left:340px;top:691px;width:41px;"></div>
<div class="a t" style="left:397.5px;top:681px;">Rozpis schvalovaných položek</div>
<div class="a hl" style="left:582px;top:691px;width:708px;"></div>
<div class="a b" style="left:372.5px;top:707.5px;">Ř.</div>
<div class="a b" style="left:405px;top:707.5px;">Položka</div>
<div class="a b" style="left:519px;top:707.5px;">DPH položky</div>
<div class="a b" style="left:612.5px;top:707.5px;">Základ DPH</div>
<div class="a chk" style="left:692.5px;top:710.5px;width:14px;height:14px;background:#fff;"><svg viewBox="0 0 10 10" style="position:absolute;left:0;top:0;width:100%;height:100%"><path d="M1.5 4.5 L4 8 L8.8 1.2" stroke="#000" stroke-width="2.4" fill="none"/></svg></div>
<div class="a b" style="left:751.5px;top:707.5px;">DPH</div>
<div class="a b" style="left:791px;top:707.5px;">Celk. částka</div>
<div class="a b" style="left:883.5px;top:707.5px;">NS</div>
<div class="a b" style="left:934px;top:707.5px;">TA</div>
<div class="a b" style="left:967.5px;top:707.5px;">Akce</div>
<div class="a b" style="left:1114px;top:707.5px;">KP</div>
<div class="a b" style="left:1166px;top:707.5px;">Příkazce</div>
<div class="a b" style="left:1248.5px;top:707.5px;">Zpráva</div>
<div class="a btn " style="left:1380px;top:711px;width:102.5px;height:18px;"><div class="bt" style="top:-2.7px;">Rozpočty k ZF</div></div>
<div class="a btn dis " style="left:1489px;top:711px;width:101px;height:18px;"><div class="bt" style="top:-2.7px;">Detail rozpočtu</div></div>
<div class="a " style="left:351.6px;top:731.4px;width:13.2px;height:21.2px;background:#c2dcfc;"></div>
<div class="a chk" style="left:352px;top:735.2px;width:13.2px;height:13.2px;background:#fff;"><svg viewBox="0 0 10 10" style="position:absolute;left:0;top:0;width:100%;height:100%"><path d="M1.5 4.5 L4 8 L8.8 1.2" stroke="#000" stroke-width="2.4" fill="none"/></svg></div>
<div class="a f g" style="left:370px;top:731.8px;width:30.6px;height:21.6px;background:#c2dcfc;"><div class="ft" style="left:2px;top:-0.9px;">1</div></div>
<div class="a f g" style="left:402.5px;top:731.8px;width:113.1px;height:21.6px;background:#c2dcfc;"><div class="ft" style="left:2px;top:-0.9px;">Lékařská prohlídka</div></div>
<div class="a f g" style="left:517.5px;top:731.8px;width:20.1px;height:21.6px;background:#c2dcfc;"><div class="ft" style="left:2px;top:-0.9px;">21</div></div>
<div class="a f g" style="left:539px;top:731.8px;width:51.6px;height:21.6px;background:#c2dcfc;"><div class="ft" style="left:2px;top:-0.9px;">311-21%</div></div>
<div class="a f g" style="left:591px;top:731.8px;width:90.6px;height:21.6px;background:#c2dcfc;"><div class="ft" style="right:1px;top:-0.9px;">1 000.00</div></div>
<div class="a f g" style="left:685px;top:731.8px;width:91.6px;height:21.6px;background:#c2dcfc;"><div class="ft" style="right:1px;top:-0.9px;">210.00</div></div>
<div class="a f g" style="left:777.5px;top:731.8px;width:91.6px;height:21.6px;background:#c2dcfc;"><div class="ft" style="right:1px;top:-0.9px;">1 210.00</div></div>
<div class="a f g" style="left:881px;top:731.8px;width:51.6px;height:21.6px;background:#ffc4c4;"><div class="ft" style="left:2px;top:-0.9px;">111</div></div>
<div class="a f g" style="left:934px;top:731.8px;width:30.1px;height:21.6px;background:#fff;"><div class="ft" style="right:1px;top:-0.9px;">2</div></div>
<div class="a f g" style="left:965px;top:731.8px;width:144.1px;height:21.6px;background:#fff;"><div class="ft" style="left:2px;top:-0.9px;">CRP 2021</div></div>
<div class="a f g" style="left:1111px;top:731.8px;width:51.6px;height:21.6px;background:#fff;"><div class="ft" style="left:2px;top:-0.9px;">10-Hlavr</div></div>
<div class="a f g" style="left:1165px;top:731.8px;width:80.6px;height:21.6px;background:#c2dcfc;"></div>
<div class="a f g" style="left:1247.5px;top:731.8px;width:128.1px;height:21.6px;background:#c2dcfc;"></div>
<div class="a f g" style="left:1379px;top:731.8px;width:228.6px;height:21.6px;background:#c2dcfc;"></div>
<div class="a chk" style="left:352px;top:757.2px;width:13.2px;height:13.2px;background:#d0d0d0;border-color:#6e7a92 #c4cad4 #c4cad4 #6e7a92;"></div>
<div class="a f g" style="left:370px;top:753.8px;width:30.6px;height:21.6px;background:#e6e6e6;"></div>
<div class="a f g" style="left:402.5px;top:753.8px;width:113.1px;height:21.6px;background:#fff;"></div>
<div class="a f g" style="left:517.5px;top:753.8px;width:20.1px;height:21.6px;background:#e6e6e6;"></div>
<div class="a f g" style="left:539px;top:753.8px;width:51.6px;height:21.6px;background:#e6e6e6;"></div>
<div class="a f g" style="left:591px;top:753.8px;width:90.6px;height:21.6px;background:#fff;"></div>
<div class="a f g" style="left:685px;top:753.8px;width:91.6px;height:21.6px;background:#fff;"></div>
<div class="a f g" style="left:777.5px;top:753.8px;width:91.6px;height:21.6px;background:#ffc4c4;"></div>
<div class="a f g" style="left:881px;top:753.8px;width:51.6px;height:21.6px;background:#ffc4c4;"></div>
<div class="a f g" style="left:934px;top:753.8px;width:30.1px;height:21.6px;background:#fff;"></div>
<div class="a f g" style="left:965px;top:753.8px;width:144.1px;height:21.6px;background:#fff;"></div>
<div class="a f g" style="left:1111px;top:753.8px;width:51.6px;height:21.6px;background:#fff;"></div>
<div class="a f g" style="left:1165px;top:753.8px;width:80.6px;height:21.6px;background:#fff;"></div>
<div class="a f g" style="left:1247.5px;top:753.8px;width:128.1px;height:21.6px;background:#fff;"></div>
<div class="a f g" style="left:1379px;top:753.8px;width:228.6px;height:21.6px;background:#fff;"></div>
<div class="a chk" style="left:352px;top:779.2px;width:13.2px;height:13.2px;background:#d0d0d0;border-color:#6e7a92 #c4cad4 #c4cad4 #6e7a92;"></div>
<div class="a f g" style="left:370px;top:775.8px;width:30.6px;height:21.6px;background:#e6e6e6;"></div>
<div class="a f g" style="left:402.5px;top:775.8px;width:113.1px;height:21.6px;background:#fff;"></div>
<div class="a f g" style="left:517.5px;top:775.8px;width:20.1px;height:21.6px;background:#e6e6e6;"></div>
<div class="a f g" style="left:539px;top:775.8px;width:51.6px;height:21.6px;background:#e6e6e6;"></div>
<div class="a f g" style="left:591px;top:775.8px;width:90.6px;height:21.6px;background:#fff;"></div>
<div class="a f g" style="left:685px;top:775.8px;width:91.6px;height:21.6px;background:#fff;"></div>
<div class="a f g" style="left:777.5px;top:775.8px;width:91.6px;height:21.6px;background:#ffc4c4;"></div>
<div class="a f g" style="left:881px;top:775.8px;width:51.6px;height:21.6px;background:#ffc4c4;"></div>
<div class="a f g" style="left:934px;top:775.8px;width:30.1px;height:21.6px;background:#fff;"></div>
<div class="a f g" style="left:965px;top:775.8px;width:144.1px;height:21.6px;background:#fff;"></div>
<div class="a f g" style="left:1111px;top:775.8px;width:51.6px;height:21.6px;background:#fff;"></div>
<div class="a f g" style="left:1165px;top:775.8px;width:80.6px;height:21.6px;background:#fff;"></div>
<div class="a f g" style="left:1247.5px;top:775.8px;width:128.1px;height:21.6px;background:#fff;"></div>
<div class="a f g" style="left:1379px;top:775.8px;width:228.6px;height:21.6px;background:#fff;"></div>
<div class="a chk" style="left:352px;top:801.2px;width:13.2px;height:13.2px;background:#d0d0d0;border-color:#6e7a92 #c4cad4 #c4cad4 #6e7a92;"></div>
<div class="a f g" style="left:370px;top:797.8px;width:30.6px;height:21.6px;background:#e6e6e6;"></div>
<div class="a f g" style="left:402.5px;top:797.8px;width:113.1px;height:21.6px;background:#fff;"></div>
<div class="a f g" style="left:517.5px;top:797.8px;width:20.1px;height:21.6px;background:#e6e6e6;"></div>
<div class="a f g" style="left:539px;top:797.8px;width:51.6px;height:21.6px;background:#e6e6e6;"></div>
<div class="a f g" style="left:591px;top:797.8px;width:90.6px;height:21.6px;background:#fff;"></div>
<div class="a f g" style="left:685px;top:797.8px;width:91.6px;height:21.6px;background:#fff;"></div>
<div class="a f g" style="left:777.5px;top:797.8px;width:91.6px;height:21.6px;background:#ffc4c4;"></div>
<div class="a f g" style="left:881px;top:797.8px;width:51.6px;height:21.6px;background:#ffc4c4;"></div>
<div class="a f g" style="left:934px;top:797.8px;width:30.1px;height:21.6px;background:#fff;"></div>
<div class="a f g" style="left:965px;top:797.8px;width:144.1px;height:21.6px;background:#fff;"></div>
<div class="a f g" style="left:1111px;top:797.8px;width:51.6px;height:21.6px;background:#fff;"></div>
<div class="a f g" style="left:1165px;top:797.8px;width:80.6px;height:21.6px;background:#fff;"></div>
<div class="a f g" style="left:1247.5px;top:797.8px;width:128.1px;height:21.6px;background:#fff;"></div>
<div class="a f g" style="left:1379px;top:797.8px;width:228.6px;height:21.6px;background:#fff;"></div>
<div class="a chk" style="left:352px;top:823.2px;width:13.2px;height:13.2px;background:#d0d0d0;border-color:#6e7a92 #c4cad4 #c4cad4 #6e7a92;"></div>
<div class="a f g" style="left:370px;top:819.8px;width:30.6px;height:21.6px;background:#e6e6e6;"></div>
<div class="a f g" style="left:402.5px;top:819.8px;width:113.1px;height:21.6px;background:#fff;"></div>
<div class="a f g" style="left:517.5px;top:819.8px;width:20.1px;height:21.6px;background:#e6e6e6;"></div>
<div class="a f g" style="left:539px;top:819.8px;width:51.6px;height:21.6px;background:#e6e6e6;"></div>
<div class="a f g" style="left:591px;top:819.8px;width:90.6px;height:21.6px;background:#fff;"></div>
<div class="a f g" style="left:685px;top:819.8px;width:91.6px;height:21.6px;background:#fff;"></div>
<div class="a f g" style="left:777.5px;top:819.8px;width:91.6px;height:21.6px;background:#ffc4c4;"></div>
<div class="a f g" style="left:881px;top:819.8px;width:51.6px;height:21.6px;background:#ffc4c4;"></div>
<div class="a f g" style="left:934px;top:819.8px;width:30.1px;height:21.6px;background:#fff;"></div>
<div class="a f g" style="left:965px;top:819.8px;width:144.1px;height:21.6px;background:#fff;"></div>
<div class="a f g" style="left:1111px;top:819.8px;width:51.6px;height:21.6px;background:#fff;"></div>
<div class="a f g" style="left:1165px;top:819.8px;width:80.6px;height:21.6px;background:#fff;"></div>
<div class="a f g" style="left:1247.5px;top:819.8px;width:128.1px;height:21.6px;background:#fff;"></div>
<div class="a f g" style="left:1379px;top:819.8px;width:228.6px;height:21.6px;background:#fff;"></div>
<div class="a chk" style="left:352px;top:845.2px;width:13.2px;height:13.2px;background:#d0d0d0;border-color:#6e7a92 #c4cad4 #c4cad4 #6e7a92;"></div>
<div class="a f g" style="left:370px;top:841.8px;width:30.6px;height:21.6px;background:#e6e6e6;"></div>
<div class="a f g" style="left:402.5px;top:841.8px;width:113.1px;height:21.6px;background:#fff;"></div>
<div class="a f g" style="left:517.5px;top:841.8px;width:20.1px;height:21.6px;background:#e6e6e6;"></div>
<div class="a f g" style="left:539px;top:841.8px;width:51.6px;height:21.6px;background:#e6e6e6;"></div>
<div class="a f g" style="left:591px;top:841.8px;width:90.6px;height:21.6px;background:#fff;"></div>
<div class="a f g" style="left:685px;top:841.8px;width:91.6px;height:21.6px;background:#fff;"></div>
<div class="a f g" style="left:777.5px;top:841.8px;width:91.6px;height:21.6px;background:#ffc4c4;"></div>
<div class="a f g" style="left:881px;top:841.8px;width:51.6px;height:21.6px;background:#ffc4c4;"></div>
<div class="a f g" style="left:934px;top:841.8px;width:30.1px;height:21.6px;background:#fff;"></div>
<div class="a f g" style="left:965px;top:841.8px;width:144.1px;height:21.6px;background:#fff;"></div>
<div class="a f g" style="left:1111px;top:841.8px;width:51.6px;height:21.6px;background:#fff;"></div>
<div class="a f g" style="left:1165px;top:841.8px;width:80.6px;height:21.6px;background:#fff;"></div>
<div class="a f g" style="left:1247.5px;top:841.8px;width:128.1px;height:21.6px;background:#fff;"></div>
<div class="a f g" style="left:1379px;top:841.8px;width:228.6px;height:21.6px;background:#fff;"></div>
<div class="a chk" style="left:352px;top:867.2px;width:13.2px;height:13.2px;background:#d0d0d0;border-color:#6e7a92 #c4cad4 #c4cad4 #6e7a92;"></div>
<div class="a f g" style="left:370px;top:863.8px;width:30.6px;height:21.6px;background:#e6e6e6;"></div>
<div class="a f g" style="left:402.5px;top:863.8px;width:113.1px;height:21.6px;background:#fff;"></div>
<div class="a f g" style="left:517.5px;top:863.8px;width:20.1px;height:21.6px;background:#e6e6e6;"></div>
<div class="a f g" style="left:539px;top:863.8px;width:51.6px;height:21.6px;background:#e6e6e6;"></div>
<div class="a f g" style="left:591px;top:863.8px;width:90.6px;height:21.6px;background:#fff;"></div>
<div class="a f g" style="left:685px;top:863.8px;width:91.6px;height:21.6px;background:#fff;"></div>
<div class="a f g" style="left:777.5px;top:863.8px;width:91.6px;height:21.6px;background:#ffc4c4;"></div>
<div class="a f g" style="left:881px;top:863.8px;width:51.6px;height:21.6px;background:#ffc4c4;"></div>
<div class="a f g" style="left:934px;top:863.8px;width:30.1px;height:21.6px;background:#fff;"></div>
<div class="a f g" style="left:965px;top:863.8px;width:144.1px;height:21.6px;background:#fff;"></div>
<div class="a f g" style="left:1111px;top:863.8px;width:51.6px;height:21.6px;background:#fff;"></div>
<div class="a f g" style="left:1165px;top:863.8px;width:80.6px;height:21.6px;background:#fff;"></div>
<div class="a f g" style="left:1247.5px;top:863.8px;width:128.1px;height:21.6px;background:#fff;"></div>
<div class="a f g" style="left:1379px;top:863.8px;width:228.6px;height:21.6px;background:#fff;"></div>
<div class="a chk" style="left:352px;top:889.2px;width:13.2px;height:13.2px;background:#d0d0d0;border-color:#6e7a92 #c4cad4 #c4cad4 #6e7a92;"></div>
<div class="a f g" style="left:370px;top:885.8px;width:30.6px;height:21.6px;background:#e6e6e6;"></div>
<div class="a f g" style="left:402.5px;top:885.8px;width:113.1px;height:21.6px;background:#fff;"></div>
<div class="a f g" style="left:517.5px;top:885.8px;width:20.1px;height:21.6px;background:#e6e6e6;"></div>
<div class="a f g" style="left:539px;top:885.8px;width:51.6px;height:21.6px;background:#e6e6e6;"></div>
<div class="a f g" style="left:591px;top:885.8px;width:90.6px;height:21.6px;background:#fff;"></div>
<div class="a f g" style="left:685px;top:885.8px;width:91.6px;height:21.6px;background:#fff;"></div>
<div class="a f g" style="left:777.5px;top:885.8px;width:91.6px;height:21.6px;background:#ffc4c4;"></div>
<div class="a f g" style="left:881px;top:885.8px;width:51.6px;height:21.6px;background:#ffc4c4;"></div>
<div class="a f g" style="left:934px;top:885.8px;width:30.1px;height:21.6px;background:#fff;"></div>
<div class="a f g" style="left:965px;top:885.8px;width:144.1px;height:21.6px;background:#fff;"></div>
<div class="a f g" style="left:1111px;top:885.8px;width:51.6px;height:21.6px;background:#fff;"></div>
<div class="a f g" style="left:1165px;top:885.8px;width:80.6px;height:21.6px;background:#fff;"></div>
<div class="a f g" style="left:1247.5px;top:885.8px;width:128.1px;height:21.6px;background:#fff;"></div>
<div class="a f g" style="left:1379px;top:885.8px;width:228.6px;height:21.6px;background:#fff;"></div>
<div class="a vs" style="left:330.6px;top:730.4px;width:16.6px;height:172.8px;border-radius:7px;"><div class="sa" style="top:0;height:17.42px;border-radius:7px;"><svg viewBox="0 0 10 10"><path d="M1.8 7 L5 2.9 L8.2 7 Z" fill="#5a6a8c"/></svg></div><div class="sa" style="bottom:0;height:17.42px;border-radius:7px;"><svg viewBox="0 0 10 10"><path d="M1.8 3 L5 7.1 L8.2 3 Z" fill="#5a6a8c"/></svg></div><div class="grip" style="top:71.4px"></div></div>
<div class="a" style="left:881px;top:911px;width:719px;height:16px;background:#8c9db8;"></div>
<div class="a" style="left:881px;top:911px;width:15px;height:16px;background:linear-gradient(#eee,#d0d0d0);border:1px solid #98a4b8;box-sizing:border-box;"><svg viewBox="0 0 10 10" style="position:absolute;left:0;top:0;width:100%;height:100%"><path d="M6.5 2.5 L3.5 5 L6.5 7.5 Z" fill="#44506a"/></svg></div>
<div class="a" style="left:896px;top:911px;width:411.5px;height:16px;background:linear-gradient(#d7d7d7,#c4c4c4);border:1px solid #a8b0c0;box-sizing:border-box;"><div class="hgrip"></div></div>
<div class="a" style="left:1588px;top:911px;width:12px;height:16px;background:linear-gradient(#eee,#d0d0d0);"><svg viewBox="0 0 10 10" style="position:absolute;left:0;top:0;width:100%;height:100%"><path d="M3.5 2.5 L6.5 5 L3.5 7.5 Z" fill="#44506a"/></svg></div>
<div class="a f" style="left:412.4px;top:913px;width:164.4px;height:19.8px;background:linear-gradient(#f4f4f4,#dedede);border-radius:4px;border-color:#7086aa;"><div class="ft" style="left:3.2px;top:-1.8px;color:#000;">Součty za řádek</div><div class="cb" style="height:15.8px"><svg viewBox="0 0 10 10" preserveAspectRatio="none"><path d="M2.2 3.4 L5 7 L7.8 3.4 Z" fill="#6a7ca0"/></svg></div></div>
<div class="a f " style="left:591px;top:914px;width:89px;height:18.5px;background:#e4e4e4;"><div class="ft" style="right:1px;top:-2.46px;">1 000.00</div></div>
<div class="a f " style="left:685px;top:914px;width:90px;height:18.5px;background:#e4e4e4;"><div class="ft" style="right:1px;top:-2.46px;color:#e81010;">210.00</div></div>
<div class="a f " style="left:777.5px;top:914px;width:90px;height:18.5px;background:#e4e4e4;"><div class="ft" style="right:1px;top:-2.46px;color:#e81010;">1 210.00</div></div>
<div class="a b r" style="right:1022.5px;top:935px;">Řádek celkem</div>
<div class="a f " style="left:591px;top:935.5px;width:89px;height:18.5px;background:#e4e4e4;"><div class="ft" style="right:1px;top:-2.46px;color:#707070;">1 000.00</div></div>
<div class="a f " style="left:685px;top:935.5px;width:90px;height:18.5px;background:#e4e4e4;"><div class="ft" style="right:1px;top:-2.46px;color:#707070;">150.00</div></div>
<div class="a f " style="left:777.5px;top:935.5px;width:90px;height:18.5px;background:#e4e4e4;"><div class="ft" style="right:1px;top:-2.46px;color:#707070;">1 150.00</div></div>
<div class="a f" style="left:887.5px;top:935px;width:255px;height:19px;background:linear-gradient(#f4f4f4,#dedede);border-radius:4px;border-color:#7086aa;"><div class="ft" style="left:3.2px;top:-2.2px;color:#000;">Aktualizovat dle prvotního dokladu</div><div class="cb" style="height:15px"><svg viewBox="0 0 10 10" preserveAspectRatio="none"><path d="M2.2 3.4 L5 7 L7.8 3.4 Z" fill="#6a7ca0"/></svg></div></div>
<div class="a chk" style="left:1147.5px;top:936px;width:14px;height:14px;background:#fff;"></div>
<div class="a t" style="left:1164px;top:938px;">.</div>
<div class="a btn " style="left:1169px;top:935px;width:87px;height:20px;"><div class="bt" style="top:-1.7px;">Proveď</div></div>
<div class="a btn " style="left:1341px;top:935px;width:100px;height:20px;"><div class="bt" style="top:-1.7px;">Rozdělovníky</div></div>
<div class="a btn " style="left:1450px;top:935px;width:148px;height:20px;"><div class="bt" style="top:-1.7px;">Kopie položky</div></div>
<div class="a hl" style="left:340px;top:970px;width:42px;"></div>
<div class="a t" style="left:395px;top:960px;">Schvalovací proces</div>
<div class="a hl" style="left:515px;top:970px;width:1075px;"></div>
<div class="a b" style="left:361px;top:976px;">Stav</div>
<div class="a f" style="left:360px;top:1000px;width:217.5px;height:20px;background:#ffff70;border-radius:4px;border-color:#7086aa;"><div class="ft" style="left:3.2px;top:-1.7px;color:#000;">Připraveno k odesl.</div><div class="cb" style="height:16px"><svg viewBox="0 0 10 10" preserveAspectRatio="none"><path d="M2.2 3.4 L5 7 L7.8 3.4 Z" fill="#6a7ca0"/></svg></div></div>
<div class="a b" style="left:585px;top:976px;">Referent</div>
<div class="a f " style="left:584px;top:1000px;width:218.5px;height:20px;background:#fff;"><div class="ft" style="left:2px;top:-1.7px;">prijmeni10014 jmeno10014</div></div>
<div class="a btn ib" style="left:1278px;top:978.4px;width:39.6px;height:40px;"></div>
<svg class="a" style="left:1272px;top:972px;width:52px;height:52px" viewBox="636 486 26 26"><path d="M647.6 492.9 L655.2 492.9 L651 498.6 L652.6 498.6 L642.2 506.9 L646.4 500 L644.6 500 Z" fill="#ececec" stroke="#111" stroke-width="0.7" stroke-linejoin="miter"/></svg>
<div class="a b" style="left:1324px;top:989px;">Odeslat</div>
<div class="a btn ib" style="left:1395.2px;top:978.4px;width:39.6px;height:40px;"></div>
<svg class="a" style="left:1390px;top:972px;width:52px;height:52px" viewBox="695 486 26 26"><path d="M698.8 493.6 L703.8 491.4 L703.8 501.8 L698.8 504 Z" fill="#e4e4e4" stroke="#8a8a8a" stroke-width="0.5"/><path d="M703.8 491.4 L712.4 491.4 L712.4 501.8 L703.8 501.8 Z" fill="#fafafa" stroke="#909090" stroke-width="0.5"/><path d="M700 494.5 L702.8 493.3 M700 496.5 L702.8 495.3 M700 498.5 L702.8 497.3" stroke="#b0b0b0" stroke-width="0.4"/><rect x="706.6" y="493.8" width="7.4" height="8" fill="#d0d0d0" stroke="#a8a8a8" stroke-width="0.4"/><path d="M712.2 502 L716.6 502 L716.6 507 L713.4 507 L712.2 505 Z" fill="#f4f4f4" stroke="#444" stroke-width="0.6"/></svg>
<div class="a b" style="left:1442.5px;top:989px;">Průběh</div>
<div class="a btn " style="left:1512.5px;top:996px;width:70px;height:19px;"><div class="bt" style="top:-2.2px;">Historie</div></div>
<div class="a" style="left:325.2px;top:1027px;width:1274.8px;height:31px;background:linear-gradient(#2c2c2c 0,#3a3a3a 4.8px,#595959 7.2px,#5a5a5a 25.2px,#484848 26.4px,#484848 100%);"></div>
<div class="a" style="left:726.4px;top:1054px;width:1.6px;height:4px;background:#707070;"></div>
<div class="a" style="left:790.8px;top:1054px;width:1.6px;height:4px;background:#707070;"></div>
<div class="a st" style="left:334px;top:1035px;">Nesoulad se sazbou DPH v závazku na ř. 1</div>
<div class="a" style="left:429.6px;top:508.6px;width:193px;height:27px;box-shadow:inset 0 0 0 4.8px #0000ff;border-radius:4px;"></div>
<div class="a" style="left:512.5px;top:728.5px;width:81.5px;height:28px;box-shadow:inset 0 0 0 4.8px #0000ff;border-radius:4px;"></div>
<div class="a" style="left:1042.4px;top:238px;width:260.4px;height:22.6px;box-shadow:inset 0 0 0 4.8px #ff0000;border-radius:4px;"></div>
<div class="a" style="left:1324px;top:587.8px;width:254.8px;height:24.4px;box-shadow:inset 0 0 0 4.8px #10c010;border-radius:4px;"></div>
<div class="a" style="left:-2px;top:735px;width:324.5px;height:34.4px;box-shadow:inset 0 0 0 5.2px #ff0000;border-radius:5px;"></div>
<div class="a" style="left:324px;top:1026px;width:291px;height:44px;box-shadow:inset 0 0 0 4.8px #10c010;border-radius:5px;"></div>
</div>
</body></html>
